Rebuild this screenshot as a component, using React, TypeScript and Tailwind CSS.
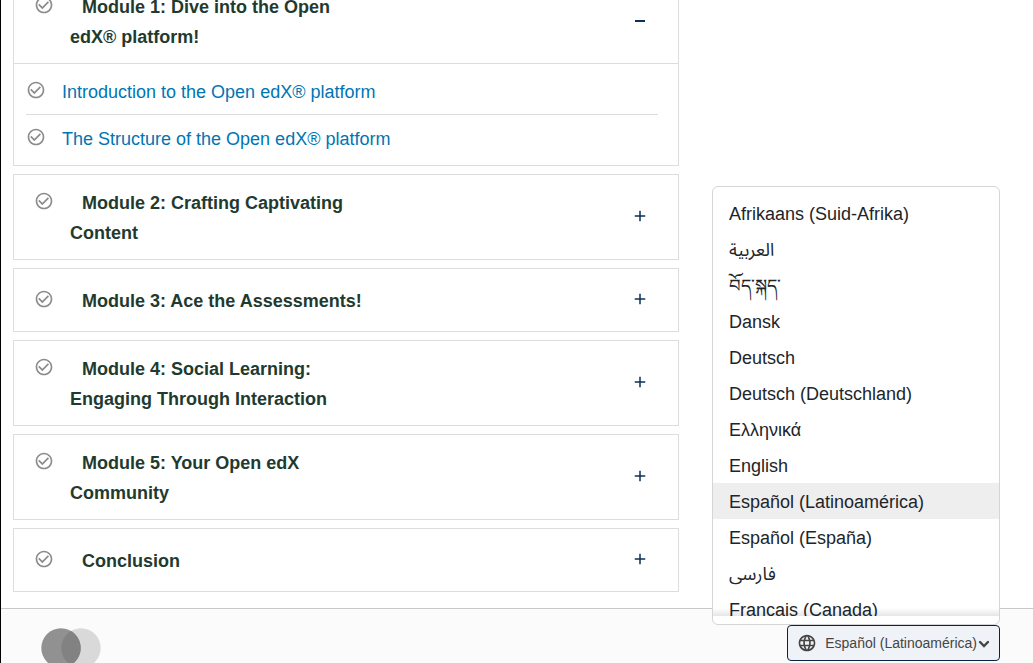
import { useState } from "react";
import { MdAdd, MdCheckCircleOutline, MdLanguage } from "react-icons/md";

type Module = { title: string; lessons: string[] };

const modules: Module[] = [
  {
    title: "Module 1: Dive into the Open edX® platform!",
    lessons: [
      "Introduction to the Open edX® platform",
      "The Structure of the Open edX® platform",
    ],
  },
  { title: "Module 2: Crafting Captivating Content", lessons: [] },
  { title: "Module 3: Ace the Assessments!", lessons: [] },
  { title: "Module 4: Social Learning: Engaging Through Interaction", lessons: [] },
  { title: "Module 5: Your Open edX Community", lessons: [] },
  { title: "Conclusion", lessons: [] },
];

const languages = [
  { code: "af", label: "Afrikaans (Suid-Afrika)" },
  { code: "ar", label: "العربية" },
  { code: "bo", label: "བོད་སྐད་" },
  { code: "da", label: "Dansk" },
  { code: "de", label: "Deutsch" },
  { code: "de-DE", label: "Deutsch (Deutschland)" },
  { code: "el", label: "Ελληνικά" },
  { code: "en", label: "English" },
  { code: "es-419", label: "Español (Latinoamérica)" },
  { code: "es-ES", label: "Español (España)" },
  { code: "fa", label: "فارسی" },
  { code: "fr-CA", label: "Français (Canada)" },
];

function MinusIcon() {
  return (
    <svg viewBox="0 0 18 18" className="size-[18px] text-[#0a3055]" aria-hidden="true">
      <path d="M4 9h10v2H4z" fill="currentColor" />
    </svg>
  );
}

function ChevronDown() {
  return (
    <svg viewBox="0 0 12 12" className="ml-px size-3" aria-hidden="true">
      <path d="M2 5l4 4 4-4" fill="none" stroke="currentColor" strokeWidth="2.4" strokeLinecap="round" />
    </svg>
  );
}

function ModuleCard({ module, initiallyOpen }: { module: Module; initiallyOpen: boolean }) {
  const [open, setOpen] = useState(initiallyOpen);
  return (
    <section className="border border-[#dddddd] bg-white">
      <h2>
        <button
          type="button"
          aria-expanded={open}
          onClick={() => setOpen(!open)}
          className="flex min-h-[62px] w-full items-center justify-between pt-[13px] pr-[29px] pb-[11px] pl-5 text-left"
        >
          <span className="flex items-start gap-4">
            <span className="flex h-[26px] items-center">
              <MdCheckCircleOutline className="size-5 text-[#8c8c8c]" />
            </span>
            <span className="block max-w-[300px] indent-3 text-[18px] leading-[30px] font-bold text-[#1f3b2f]">
              {module.title}
            </span>
          </span>
          <span className="pb-1">
            {open ? <MinusIcon /> : <MdAdd className="size-[18px] text-[#0a3055]" />}
          </span>
        </button>
      </h2>
      {open && module.lessons.length > 0 && (
        <ol className="border-t border-[#dddddd] py-1 pr-5 pl-3">
          {module.lessons.map((lesson) => (
            <li key={lesson} className="border-b border-[#dddddd] last:border-b-0">
              <a href="#lesson" className="flex h-[46px] items-center gap-4 text-[18px] text-[#0075b4]">
                <span className="pb-0.5">
                  <MdCheckCircleOutline className="size-5 text-[#8c8c8c]" />
                </span>
                <span className="pt-0.5">{lesson}</span>
              </a>
            </li>
          ))}
        </ol>
      )}
    </section>
  );
}

function LanguageSelector() {
  const [open, setOpen] = useState(true);
  const [selected, setSelected] = useState("es-419");
  const current = languages.find((language) => language.code === selected);
  return (
    <div className="relative">
      <button
        type="button"
        aria-haspopup="true"
        aria-expanded={open}
        onClick={() => setOpen(!open)}
        className="flex h-9 items-center rounded border border-[#0a2342] bg-[#eff2f6] px-[9px] text-[14px] whitespace-nowrap text-[#454545]"
      >
        <MdLanguage className="mr-2 size-5" />
        {current?.label}
        <ChevronDown />
      </button>
      {open && (
        <div className="absolute right-0 bottom-full w-72 rounded-md border border-[#d5d5d5] bg-white py-2">
          <div className="relative">
            <ul className="max-h-[421px] overflow-y-auto [scrollbar-width:none]">
              {languages.map(({ code, label }) => (
                <li key={code}>
                  <button
                    type="button"
                    onClick={() => setSelected(code)}
                    className={
                      code === selected
                        ? "flex h-9 w-full items-center bg-[#eeeeee] px-4 pt-0.5 text-[18px] text-[#212529]"
                        : "flex h-9 w-full items-center px-4 pt-0.5 text-[18px] text-[#212529]"
                    }
                  >
                    {label}
                  </button>
                </li>
              ))}
            </ul>
            <div className="pointer-events-none absolute inset-x-0 bottom-0 h-2 bg-linear-to-t from-black/10 to-transparent" />
          </div>
        </div>
      )}
    </div>
  );
}

export default function App() {
  return (
    <div className="flex h-screen flex-col overflow-hidden border-l border-black bg-white font-['Liberation_Sans','Noto_Sans_Arabic','DejaVu_Sans',sans-serif]">
      <main className="-mt-[22px] flex shrink-0 flex-col gap-2 pr-[354px] pb-4 pl-3">
        {modules.map((module, index) => (
          <ModuleCard key={module.title} module={module} initiallyOpen={index === 0} />
        ))}
      </main>
      <footer className="flex flex-1 items-start justify-between border-t border-[#c8c8c8] bg-[#fbfbfb] pt-4 pr-[33px] pl-10">
        <svg viewBox="0 0 60 40" className="mt-[3px] h-10 w-[60px] shrink-0" aria-hidden="true">
          <circle cx="40" cy="20" r="19.7" fill="#d9d9d9" />
          <circle cx="20" cy="20" r="19.7" fill="#919191" />
          <path d="M30 3.03a19.7 19.7 0 0 1 0 33.94a19.7 19.7 0 0 1 0-33.94z" fill="#828282" />
        </svg>
        <LanguageSelector />
      </footer>
    </div>
  );
}
